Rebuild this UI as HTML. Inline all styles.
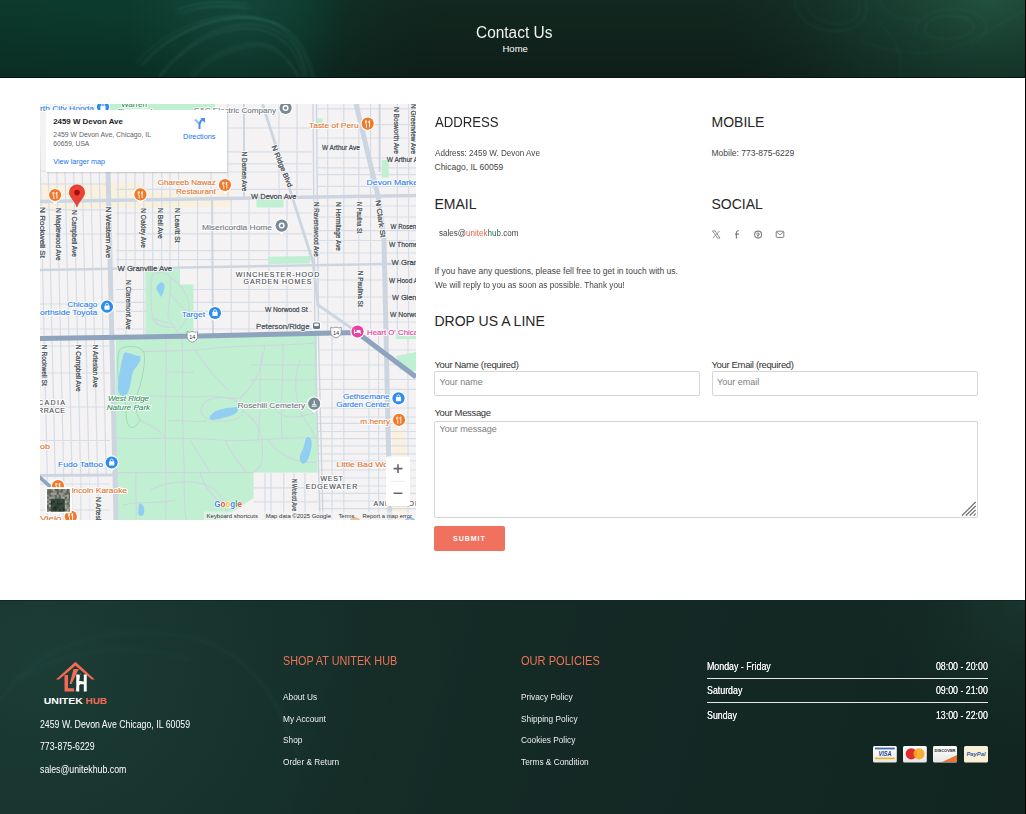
<!DOCTYPE html>
<html><head><meta charset="utf-8">
<style>
*{margin:0;padding:0;box-sizing:border-box}
html,body{width:1026px;height:814px;overflow:hidden;background:#fff;font-family:"Liberation Sans",sans-serif}
.a{position:absolute;white-space:nowrap;line-height:1}
.bg{position:absolute;left:0;width:1026px;overflow:hidden}
#map{position:absolute;left:40px;top:104px;width:376px;height:416px;overflow:hidden}
.h{font-size:14px;color:#262626}
.t{font-size:8.5px;color:#444}
.lbl{font-size:9.5px;color:#333;letter-spacing:-0.35px}
.inp{position:absolute;border:1px solid #d6d6d6;border-radius:2px;background:#fff}
.ph{font-size:9px;color:#7d7d7d}
.fl{font-size:9px;color:#f0f0f0;transform:scaleX(0.92);transform-origin:0 0}
.hr{position:absolute;left:707px;width:281px;height:1px;background:#e8e8e8}
.hd{font-size:10.5px;color:#f4f4f4;transform:scaleX(0.84);text-shadow:0 0 0.4px #fff}
.hdl{transform-origin:0 0}
.hdr{transform-origin:100% 0}
.sx{transform-origin:0 0}
</style></head><body>
<div class="bg" style="top:0;height:78px;background:#12271f">
<svg width="1026" height="78" viewBox="0 0 1026 78" style="position:absolute;left:0;top:0">
<defs>
<radialGradient id="hg1" cx="110" cy="25" r="340" gradientUnits="userSpaceOnUse"><stop offset="0" stop-color="#0c3c2e"/><stop offset="0.55" stop-color="#0d382c"/><stop offset="1" stop-color="#12271f" stop-opacity="0"/></radialGradient>
<radialGradient id="hg2" cx="990" cy="0" r="290" gradientUnits="userSpaceOnUse"><stop offset="0" stop-color="#21513f"/><stop offset="0.5" stop-color="#183d30" stop-opacity="0.75"/><stop offset="1" stop-color="#12271f" stop-opacity="0"/></radialGradient>
<radialGradient id="hg3" cx="235" cy="25" r="110" gradientUnits="userSpaceOnUse"><stop offset="0" stop-color="#1a5244" stop-opacity="0.6"/><stop offset="1" stop-color="#1b5646" stop-opacity="0"/></radialGradient>
<linearGradient id="hg4" x1="0" y1="0" x2="0" y2="78" gradientUnits="userSpaceOnUse"><stop offset="0" stop-color="#000" stop-opacity="0"/><stop offset="1" stop-color="#000" stop-opacity="0.22"/></linearGradient>
<filter id="hb" x="-20%" y="-50%" width="140%" height="200%"><feGaussianBlur stdDeviation="1.2"/></filter>
<filter id="hb2" x="-20%" y="-50%" width="140%" height="200%"><feGaussianBlur stdDeviation="4"/></filter>
</defs>
<rect width="1026" height="78" fill="#12271f"/>
<rect width="1026" height="78" fill="url(#hg1)"/>
<rect width="1026" height="78" fill="url(#hg3)"/>
<rect width="1026" height="78" fill="url(#hg2)"/>
<g filter="url(#hb)" fill="none" stroke="#5fb39b" stroke-width="0.8"><path transform="translate(1.0,1.5)" d="M140 64 C150 50 175 30 208 21 C225 16 250 12 276 23 C292 30 305 50 311.5 78" stroke-opacity="0.23"/><path transform="translate(3.5,1.4)" d="M140 64 C150 50 175 30 208 21 C225 16 250 12 276 23 C292 30 305 50 311.5 78" stroke-opacity="0.25"/><path transform="translate(-3.8,-0.2)" d="M140 64 C150 50 175 30 208 21 C225 16 250 12 276 23 C292 30 305 50 311.5 78" stroke-opacity="0.25"/><path transform="translate(1.2,2.4)" d="M140 64 C150 50 175 30 208 21 C225 16 250 12 276 23 C292 30 305 50 311.5 78" stroke-opacity="0.14"/><path transform="translate(-0.2,-1.5)" d="M159.5 78 C170 62 200 35 227.7 29 C245 25 270 22 292 45 C300 55 304 68 305.7 78" stroke-opacity="0.20"/><path transform="translate(0.6,-2.9)" d="M159.5 78 C170 62 200 35 227.7 29 C245 25 270 22 292 45 C300 55 304 68 305.7 78" stroke-opacity="0.15"/><path transform="translate(-1.8,2.5)" d="M159.5 78 C170 62 200 35 227.7 29 C245 25 270 22 292 45 C300 55 304 68 305.7 78" stroke-opacity="0.23"/><path transform="translate(-2.7,1.8)" d="M159.5 78 C170 62 200 35 227.7 29 C245 25 270 22 292 45 C300 55 304 68 305.7 78" stroke-opacity="0.14"/><path transform="translate(0.9,-2.2)" d="M188.7 78 C200 62 220 50 247 45 C262 43 280 48 296 78" stroke-opacity="0.12"/><path transform="translate(3.0,-1.7)" d="M188.7 78 C200 62 220 50 247 45 C262 43 280 48 296 78" stroke-opacity="0.15"/><path transform="translate(3.9,2.2)" d="M188.7 78 C200 62 220 50 247 45 C262 43 280 48 296 78" stroke-opacity="0.16"/><path transform="translate(3.7,0.2)" d="M188.7 78 C200 62 220 50 247 45 C262 43 280 48 296 78" stroke-opacity="0.21"/><path transform="translate(-2.4,2.6)" d="M179 11.7 C195 5 214 1 249 5.8" stroke-opacity="0.22"/><path transform="translate(3.7,2.4)" d="M179 11.7 C195 5 214 1 249 5.8" stroke-opacity="0.16"/><path transform="translate(-1.1,-2.0)" d="M179 11.7 C195 5 214 1 249 5.8" stroke-opacity="0.14"/><path transform="translate(-3.5,-1.2)" d="M179 11.7 C195 5 214 1 249 5.8" stroke-opacity="0.20"/></g>
<g filter="url(#hb)" fill="none" stroke="#5fb39b" stroke-width="0.9">
<path d="M795 0 C795 20 815 32 840 31 C862 30 870 15 865 0" stroke-opacity="0.16"/>
<path d="M805 0 C808 15 822 25 842 24 C858 22 862 10 858 0" stroke-opacity="0.12"/>
<path d="M925 30 C925 18 945 12 965 18 C980 24 975 36 955 38 C940 40 925 38 925 30" stroke-opacity="0.16"/>
<path d="M915 35 C912 20 935 5 965 10 C990 15 995 35 970 45" stroke-opacity="0.12"/>
<path d="M878 20 C890 35 905 50 900 78" stroke-opacity="0.12"/>
<path d="M860 40 C880 50 930 60 960 45 C985 35 1005 20 1026 10" stroke-opacity="0.12"/>
<path d="M880 0 C885 15 900 22 920 20" stroke-opacity="0.12"/>
</g>
<rect width="1026" height="78" fill="url(#hg4)"/>
<rect y="77" width="1026" height="1" fill="#041612"/>
</svg>
</div>
<div class="a" style="left:476px;top:24.5px;font-size:16px;color:#f2f2f2;transform:scaleX(0.965);transform-origin:0 0">Contact Us</div>
<div class="a" style="left:502.5px;top:43.5px;font-size:9.5px;color:#fff">Home</div>

<div id="map"><svg width="376" height="416" viewBox="40 104 376 416" style="position:absolute;left:0;top:0;font-family:'Liberation Sans',sans-serif">
<rect x="40" y="104" width="376" height="416" fill="#f4f2f3"/>
<path d="M40 183.5 L145 182.5 L145 191.5 L232 190.5 L232 196.5 L40 199 Z" fill="#faf0de"/>
<path d="M40 204 L232 201 L232 207 L40 209.5 Z" fill="#faf0de"/>
<path d="M392.5 418 L401 418 L409 470 L410 520 L394 520 Z" fill="#faf0de"/>
<path d="M55.5 475V520 M72.3 475V520 M89.5 475V520" stroke="#e4e8ee" stroke-width="0.9" fill="none"/>
<path d="M38.8 104L47.3 475 M46.7 104L55.2 475 M55.2 104L63.7 475 M63.5 104L72.0 475 M72.1 104L80.6 475 M80.6 104L89.1 475 M89.1 104L97.6 475 M97.7 104L106.2 475 M47.0 475V520 M63.7 475V520 M80.9 475V520 M98.0 475V520 M126.0 104V337 M143.8 104V337 M161.7 104V337 M178.6 104V337 M197.5 199V337 M231.3 199V337 M249.0 199V337 M269.0 199V337 M287.0 199V337 M211.0 104V199 M228.0 104V199 M279.0 104V199 M297.0 104V199 M118.0 104V270 M135.0 104V270 M152.7 104V270 M170.0 104V270 M327.7 104V336 M343.8 104V336 M358.8 104V336 M370.6 104V336 M397.3 104V336 M408.6 104V336 M332.0 336V520 M343.8 336V520 M368.9 336V520 M378.6 336V520 M408.0 336V520 M265.0 473V520 M271.0 473V520 M283.8 473V520 M294.0 473V520 M305.0 473V520 M40 171H110 M40 184H110 M40 209.8H110 M40 234H110 M40 304H110 M40 329H110 M40 346H110 M40 373H110 M40 407H110 M40 440.5H110 M40 484H110 M40 510H110 M116 213H312 M116 233.8H312 M116 250.7H312 M116 259.6H312 M116 289.5H312 M116 302.4H312 M116 311.3H312 M116 329H312 M116 128H312 M116 151.8H312 M116 163.8H312 M116 172H312 M116 189.4H312 M318 108.8H416 M318 124.6H416 M318 138H416 M318 158H416 M318 167.8H416 M318 174.7H416 M318 186.4H416 M318 206H416 M318 217H416 M318 230.6H416 M318 240.5H416 M318 253H416 M318 280H416 M318 297H416 M318 314H416 M318 322H416 M318 350H416 M318 365H416 M318 379.5H416 M318 389.3H416 M318 408H416 M318 417H416 M318 423.4H416 M318 431.5H416 M318 438.6H416 M318 445.8H416 M318 453.9H416 M318 461H416 M318 470H416 M318 478H416 M318 486H416 M318 493.3H416 M318 501H416 M318 508.6H416 M254 487.8H318 M254 501.8H318" stroke="#d6dde6" stroke-width="1.2" fill="none"/>
<path d="M115.8 339 L317 335 L317.5 472.6 L253.5 472.6 L253.5 498 L220 520 L115.8 520 Z" fill="#c0efd2"/>
<path d="M145.4 269.6 L180 269.3 L180 284.5 L193.5 284.5 L193.5 335 L145.4 336 Z" fill="#c0efd2"/>
<rect x="256.5" y="199.5" width="27" height="8" fill="#c0efd2"/>
<path d="M268 256.7 L310 256 L310 263.6 L268 264 Z" fill="#c0efd2"/>
<rect x="381.7" y="160" width="7" height="17.5" fill="#c0efd2"/>
<rect x="110" y="104" width="105" height="7" fill="#c0efd2"/>
<rect x="316" y="118.5" width="6.5" height="5" fill="#c0efd2"/>
<rect x="396" y="333" width="20" height="6" fill="#c0efd2"/>
<path d="M396 356 L416 352 L416 371 L400 370 Z" fill="#c0efd2"/>
<path d="M140 352 C160 350 190 352 215 348 C240 345 280 346 317 343 M166 340 C167 380 164 430 166 472 C167 490 165 505 166 520 M182 338 C184 370 181 420 184 460 C185 480 183 500 186 520 M166 372 C175 371 185 373 194 372 M140 397 C160 394 190 399 210 396 C218 395 228 400 242 398 M201 410 C201 402 212 397 222 397.5 C234 398 244 404 243 411 C242 419 232 422 221 421 C210 421 201 417 201 410 Z M168 421 C180 419 195 423 207 421 M117 438 C150 440 180 436 220 440 C250 443 280 436 317 438 M117 472.6 H253.5 M195 350 C205 365 215 378 228 390 M240 398 C255 385 262 370 265 345 M262 352 C258 380 262 410 258 440 M283 345 C283 380 280 410 282 438 M300 360 C292 380 296 405 305 420 C312 430 316 438 317 440 M250 365 H317 M250 380 C270 378 300 382 317 379 M243 411 C255 420 265 430 262 460 C262 465 258 470 254 472 M275 410 C285 420 300 418 317 412 M268 440 C278 455 300 465 317 462 M136 472 C135 490 137 505 136 520 M150 490 C170 480 200 478 215 490 C225 500 230 510 225 520 M200 472 C205 490 215 500 228 506 M123 505 C140 500 160 505 175 500 M190 440 C200 455 205 465 210 472 M225 440 C230 452 238 462 246 472 M140 420 C150 425 160 430 165 438 M152 276 C152 272 168 271 170 277 C172 290 168 305 168 315 C168 322 176 326 178.5 335 M152 276 C150 290 151 310 153 318 C155 325 162 328 175 327 M170 277 C178 283 188 292 189 305 C190 318 184 325 178 330 M169 292 C175 300 183 308 188 312 M153 318 C160 322 168 322 170 324" stroke="#cdd6df" stroke-width="1.05" fill="none"/>
<path d="M122 348 C130 345 140 346 144 352 C146 362 142 380 138 392 C135 400 134 410 140 420 C136 428 130 430 128 424 C124 415 128 405 124 398 C118 390 117 370 118 358 C118 352 120 349 122 348 Z" fill="none" stroke="#8fcca7" stroke-width="0.6"/>
<path d="M159.5 283 C161.5 281.5 163.5 282 164.3 285 C165 289 163 294 161 297 C159 293 157 291 156.3 288.5 C156.5 286.5 158 284.5 159.5 283 Z" fill="#92cef2"/>
<path d="M124 353 C128 351 133 356 140 356 C142 362 136 366 133 372 C130 380 131 390 126 395 C120 398 117 392 118 385 C119 375 121 362 124 353 Z" fill="#92cef2"/>
<path d="M212 414 C218 408 228 408 238 407 C240 411 234 416 226 417 C220 419 213 421 210 419 C209 417 210 416 212 414 Z" fill="#92cef2"/>
<path d="M307 437 C311 436 313 442 311 449 C309 456 309 462 303 464 C299 462 299 456 302 451 C305 446 304 440 307 437 Z" fill="#92cef2"/>
<path d="M139 504 C143 503 145 508 144 513 C143 517 138 517 138 512 Z" fill="#92cef2"/>
<path d="M40 201.5 L416 195.5" stroke="#cdd6e0" stroke-width="3.5" fill="none"/>
<path d="M106.5 104 L116 520" stroke="#cdd6e0" stroke-width="5" fill="none"/>
<path d="M40 270 L416 263.5" stroke="#cdd6e0" stroke-width="2.5" fill="none"/>
<path d="M262.5 104 L313 262 L318 305 L357 332" stroke="#cdd6e0" stroke-width="2.8" fill="none"/>
<path d="M356 104 L378 196 L384 240 L390 520" stroke="#cdd6e0" stroke-width="5" fill="none"/>
<path d="M379.6 104 L379.6 172" stroke="#cdd6e0" stroke-width="2" fill="none"/>
<path d="M212 198 L213 335" stroke="#cdd6e0" stroke-width="2" fill="none"/>
<path d="M244 104 L244 199" stroke="#cdd6e0" stroke-width="2" fill="none"/>
<path d="M313 104 L315 337 L320 520 M316.5 104 L318.5 337 L323 520" stroke="#cdd6e0" stroke-width="1.4" fill="none"/>
<path d="M40 475.5 L116 475" stroke="#cdd6e0" stroke-width="2.8" fill="none"/>
<path d="M40 338.5 L200 336 L357 332.5 L416 377" stroke="#8ea3bd" stroke-width="5" fill="none" stroke-linejoin="round"/>
<path d="M38 476 L52.5 488.5" stroke="#8ea3bd" stroke-width="3.6" fill="none"/>
<g><path d="M50.1 198.5 L55.1 204.6 L60.1 198.5 Z" fill="#fff" stroke="#00000022" stroke-width="0.6"/><circle cx="55.1" cy="195" r="7.199999999999999" fill="#fff"/><path d="M50.1 198.5 L55.1 204.6 L60.1 198.5 Z" fill="#fff"/><circle cx="55.1" cy="195" r="6.1" fill="#f07a2a"/>
<path d="M52.9 192.0v2.4a1.2 1.2 0 0 0 1 1.2v3.4M53.9 192.0v2.2M56.9 192.0v6.6M56.9 192.0c-1 0.6 -1 2.6 0 3" stroke="#fff" stroke-width="0.9" fill="none"/>
<g><path d="M135.4 197.9 L140.4 204.0 L145.4 197.9 Z" fill="#fff" stroke="#00000022" stroke-width="0.6"/><circle cx="140.4" cy="194.4" r="7.199999999999999" fill="#fff"/><path d="M135.4 197.9 L140.4 204.0 L145.4 197.9 Z" fill="#fff"/><circle cx="140.4" cy="194.4" r="6.1" fill="#f07a2a"/>
<path d="M138.2 191.4v2.4a1.2 1.2 0 0 0 1 1.2v3.4M139.2 191.4v2.2M142.2 191.4v6.6M142.2 191.4c-1 0.6 -1 2.6 0 3" stroke="#fff" stroke-width="0.9" fill="none"/>
<g><path d="M220.0 188.5 L225.0 194.6 L230.0 188.5 Z" fill="#fff" stroke="#00000022" stroke-width="0.6"/><circle cx="225" cy="185" r="7.199999999999999" fill="#fff"/><path d="M220.0 188.5 L225.0 194.6 L230.0 188.5 Z" fill="#fff"/><circle cx="225" cy="185" r="6.1" fill="#f07a2a"/>
<path d="M222.8 182.0v2.4a1.2 1.2 0 0 0 1 1.2v3.4M223.8 182.0v2.2M226.8 182.0v6.6M226.8 182.0c-1 0.6 -1 2.6 0 3" stroke="#fff" stroke-width="0.9" fill="none"/>
<g><path d="M362.7 127.1 L367.7 133.2 L372.7 127.1 Z" fill="#fff" stroke="#00000022" stroke-width="0.6"/><circle cx="367.7" cy="123.6" r="7.199999999999999" fill="#fff"/><path d="M362.7 127.1 L367.7 133.2 L372.7 127.1 Z" fill="#fff"/><circle cx="367.7" cy="123.6" r="6.1" fill="#f07a2a"/>
<path d="M365.5 120.6v2.4a1.2 1.2 0 0 0 1 1.2v3.4M366.5 120.6v2.2M369.5 120.6v6.6M369.5 120.6c-1 0.6 -1 2.6 0 3" stroke="#fff" stroke-width="0.9" fill="none"/>
<g><path d="M394.0 423.3 L399.0 429.4 L404.0 423.3 Z" fill="#fff" stroke="#00000022" stroke-width="0.6"/><circle cx="399" cy="419.8" r="7.199999999999999" fill="#fff"/><path d="M394.0 423.3 L399.0 429.4 L404.0 423.3 Z" fill="#fff"/><circle cx="399" cy="419.8" r="6.1" fill="#f07a2a"/>
<path d="M396.8 416.8v2.4a1.2 1.2 0 0 0 1 1.2v3.4M397.8 416.8v2.2M400.8 416.8v6.6M400.8 416.8c-1 0.6 -1 2.6 0 3" stroke="#fff" stroke-width="0.9" fill="none"/>
<g><path d="M53.0 489.5 L58.0 495.6 L63.0 489.5 Z" fill="#fff" stroke="#00000022" stroke-width="0.6"/><circle cx="58" cy="486" r="7.199999999999999" fill="#fff"/><path d="M53.0 489.5 L58.0 495.6 L63.0 489.5 Z" fill="#fff"/><circle cx="58" cy="486" r="6.1" fill="#f07a2a"/>
<path d="M55.8 483.0v2.4a1.2 1.2 0 0 0 1 1.2v3.4M56.8 483.0v2.2M59.8 483.0v6.6M59.8 483.0c-1 0.6 -1 2.6 0 3" stroke="#fff" stroke-width="0.9" fill="none"/>
<g><path d="M65.8 520.1 L70.8 526.2 L75.8 520.1 Z" fill="#fff" stroke="#00000022" stroke-width="0.6"/><circle cx="70.8" cy="516.6" r="7.199999999999999" fill="#fff"/><path d="M65.8 520.1 L70.8 526.2 L75.8 520.1 Z" fill="#fff"/><circle cx="70.8" cy="516.6" r="6.1" fill="#f07a2a"/>
<path d="M68.6 513.6v2.4a1.2 1.2 0 0 0 1 1.2v3.4M69.6 513.6v2.2M72.6 513.6v6.6M72.6 513.6c-1 0.6 -1 2.6 0 3" stroke="#fff" stroke-width="0.9" fill="none"/>
<g><path d="M350.0 526.5 L355.0 532.6 L360.0 526.5 Z" fill="#fff" stroke="#00000022" stroke-width="0.6"/><circle cx="355" cy="523" r="7.199999999999999" fill="#fff"/><path d="M350.0 526.5 L355.0 532.6 L360.0 526.5 Z" fill="#fff"/><circle cx="355" cy="523" r="6.1" fill="#f07a2a"/>
<path d="M352.8 520.0v2.4a1.2 1.2 0 0 0 1 1.2v3.4M353.8 520.0v2.2M356.8 520.0v6.6M356.8 520.0c-1 0.6 -1 2.6 0 3" stroke="#fff" stroke-width="0.9" fill="none"/>
<g><path d="M98.0 110.5 L103.0 116.6 L108.0 110.5 Z" fill="#fff" stroke="#00000022" stroke-width="0.6"/><circle cx="103" cy="107" r="7.199999999999999" fill="#fff"/><path d="M98.0 110.5 L103.0 116.6 L108.0 110.5 Z" fill="#fff"/><circle cx="103" cy="107" r="6.1" fill="#2e8cf0"/>
<rect x="100.4" y="105.8" width="5.2" height="4.2" rx="0.6" fill="#fff"/><path d="M101.6 106.0v-1a1.4 1.4 0 0 1 2.8 0v1" stroke="#fff" stroke-width="0.8" fill="none"/>
<g><path d="M102.0 310.2 L107.0 316.3 L112.0 310.2 Z" fill="#fff" stroke="#00000022" stroke-width="0.6"/><circle cx="107" cy="306.7" r="7.199999999999999" fill="#fff"/><path d="M102.0 310.2 L107.0 316.3 L112.0 310.2 Z" fill="#fff"/><circle cx="107" cy="306.7" r="6.1" fill="#2e8cf0"/>
<rect x="104.4" y="305.5" width="5.2" height="4.2" rx="0.6" fill="#fff"/><path d="M105.6 305.7v-1a1.4 1.4 0 0 1 2.8 0v1" stroke="#fff" stroke-width="0.8" fill="none"/>
<g><path d="M210.0 316.5 L215.0 322.6 L220.0 316.5 Z" fill="#fff" stroke="#00000022" stroke-width="0.6"/><circle cx="215" cy="313" r="7.199999999999999" fill="#fff"/><path d="M210.0 316.5 L215.0 322.6 L220.0 316.5 Z" fill="#fff"/><circle cx="215" cy="313" r="6.1" fill="#2e8cf0"/>
<rect x="212.4" y="311.8" width="5.2" height="4.2" rx="0.6" fill="#fff"/><path d="M213.6 312.0v-1a1.4 1.4 0 0 1 2.8 0v1" stroke="#fff" stroke-width="0.8" fill="none"/>
<g><path d="M106.7 466.0 L111.7 472.1 L116.7 466.0 Z" fill="#fff" stroke="#00000022" stroke-width="0.6"/><circle cx="111.7" cy="462.5" r="7.199999999999999" fill="#fff"/><path d="M106.7 466.0 L111.7 472.1 L116.7 466.0 Z" fill="#fff"/><circle cx="111.7" cy="462.5" r="6.1" fill="#2e8cf0"/>
<rect x="109.1" y="461.3" width="5.2" height="4.2" rx="0.6" fill="#fff"/><path d="M110.3 461.5v-1a1.4 1.4 0 0 1 2.8 0v1" stroke="#fff" stroke-width="0.8" fill="none"/>
<g><path d="M393.5 401.8 L398.5 407.9 L403.5 401.8 Z" fill="#fff" stroke="#00000022" stroke-width="0.6"/><circle cx="398.5" cy="398.3" r="7.199999999999999" fill="#fff"/><path d="M393.5 401.8 L398.5 407.9 L403.5 401.8 Z" fill="#fff"/><circle cx="398.5" cy="398.3" r="6.1" fill="#2e8cf0"/>
<rect x="395.9" y="397.1" width="5.2" height="4.2" rx="0.6" fill="#fff"/><path d="M397.1 397.3v-1a1.4 1.4 0 0 1 2.8 0v1" stroke="#fff" stroke-width="0.8" fill="none"/>
<g><path d="M405.0 526.5 L410.0 532.6 L415.0 526.5 Z" fill="#fff" stroke="#00000022" stroke-width="0.6"/><circle cx="410" cy="523" r="7.199999999999999" fill="#fff"/><path d="M405.0 526.5 L410.0 532.6 L415.0 526.5 Z" fill="#fff"/><circle cx="410" cy="523" r="6.1" fill="#2e8cf0"/>
<rect x="407.4" y="521.8" width="5.2" height="4.2" rx="0.6" fill="#fff"/><path d="M408.6 522.0v-1a1.4 1.4 0 0 1 2.8 0v1" stroke="#fff" stroke-width="0.8" fill="none"/>
<g><path d="M280.6 111.5 L285.6 117.6 L290.6 111.5 Z" fill="#fff" stroke="#00000022" stroke-width="0.6"/><circle cx="285.6" cy="108" r="7.199999999999999" fill="#fff"/><path d="M280.6 111.5 L285.6 117.6 L290.6 111.5 Z" fill="#fff"/><circle cx="285.6" cy="108" r="6.1" fill="#7a8a95"/>
<circle cx="285.6" cy="108" r="2.3" fill="none" stroke="#fff" stroke-width="1.4"/>
<g><path d="M276.7 229.1 L281.7 235.2 L286.7 229.1 Z" fill="#fff" stroke="#00000022" stroke-width="0.6"/><circle cx="281.7" cy="225.6" r="7.199999999999999" fill="#fff"/><path d="M276.7 229.1 L281.7 235.2 L286.7 229.1 Z" fill="#fff"/><circle cx="281.7" cy="225.6" r="6.1" fill="#7a8a95"/>
<circle cx="281.7" cy="225.6" r="2.3" fill="none" stroke="#fff" stroke-width="1.4"/>
<g><path d="M309.2 407.2 L314.2 413.3 L319.2 407.2 Z" fill="#fff" stroke="#00000022" stroke-width="0.6"/><circle cx="314.2" cy="403.7" r="7.199999999999999" fill="#fff"/><path d="M309.2 407.2 L314.2 413.3 L319.2 407.2 Z" fill="#fff"/><circle cx="314.2" cy="403.7" r="6.1" fill="#7a8a95"/>
<path d="M311.7 406.2h5M314.2 400.7v4M312.2 404.7h4" stroke="#fff" stroke-width="1" fill="none"/>
<g><path d="M352.5 335.0 L357.5 341.1 L362.5 335.0 Z" fill="#fff" stroke="#00000022" stroke-width="0.6"/><circle cx="357.5" cy="331.5" r="7.199999999999999" fill="#fff"/><path d="M352.5 335.0 L357.5 341.1 L362.5 335.0 Z" fill="#fff"/><circle cx="357.5" cy="331.5" r="6.1" fill="#e83fa6"/>
<path d="M354.5 329.5v4.5M354.5 332.5h6v1.5" stroke="#fff" stroke-width="0.9" fill="none"/><rect x="356.5" y="330.0" width="4" height="2.2" fill="#fff"/>
<rect x="312" y="321.5" width="9" height="8.5" rx="2" fill="#fff"/><rect x="313" y="322.5" width="7" height="6.5" rx="1.5" fill="#6d7b88"/><rect x="314.3" y="323.6" width="4.4" height="2.4" fill="#fff"/>
<path d="M187.10000000000002 331.6 c1.5 0.8 3 0.8 4 0 h2.4 c1 0.8 2.5 0.8 4 0 v5 c0 3.4 -2.8 5 -5.2 5.6 c-2.4 -0.6 -5.2 -2.2 -5.2 -5.6 Z" fill="#fff" stroke="#7d8894" stroke-width="0.8"/><text x="192.3" y="338.90000000000003" font-size="5.6" text-anchor="middle" fill="#333">14</text>
<path d="M330.8 327.3 c1.5 0.8 3 0.8 4 0 h2.4 c1 0.8 2.5 0.8 4 0 v5 c0 3.4 -2.8 5 -5.2 5.6 c-2.4 -0.6 -5.2 -2.2 -5.2 -5.6 Z" fill="#fff" stroke="#7d8894" stroke-width="0.8"/><text x="336" y="334.6" font-size="5.6" text-anchor="middle" fill="#333">14</text>
<text x="40.0" y="111.2" font-size="7.6" font-weight="normal" font-style="normal" textLength="54.0" lengthAdjust="spacingAndGlyphs" fill="#fff" stroke="#fff" stroke-width="1.8" stroke-linejoin="round">rth City Honda</text>
<text x="40.0" y="111.2" font-size="7.6" font-weight="normal" font-style="normal" textLength="54.0" lengthAdjust="spacingAndGlyphs" fill="#2b7de9" stroke="#2b7de9" stroke-width="0.12">rth City Honda</text>
<text x="121.0" y="107.2" font-size="7.6" font-weight="normal" font-style="normal" textLength="26.0" lengthAdjust="spacingAndGlyphs" fill="#fff" stroke="#fff" stroke-width="1.8" stroke-linejoin="round">Warren</text>
<text x="121.0" y="107.2" font-size="7.6" font-weight="normal" font-style="normal" textLength="26.0" lengthAdjust="spacingAndGlyphs" fill="#2f8f5b" stroke="#2f8f5b" stroke-width="0.12">Warren</text>
<text x="118.0" y="113.7" font-size="7.6" font-weight="normal" font-style="normal" textLength="34.0" lengthAdjust="spacingAndGlyphs" fill="#fff" stroke="#fff" stroke-width="1.8" stroke-linejoin="round">Playground</text>
<text x="118.0" y="113.7" font-size="7.6" font-weight="normal" font-style="normal" textLength="34.0" lengthAdjust="spacingAndGlyphs" fill="#2f8f5b" stroke="#2f8f5b" stroke-width="0.12">Playground</text>
<text x="194.0" y="112.7" font-size="7.6" font-weight="normal" font-style="normal" textLength="82.0" lengthAdjust="spacingAndGlyphs" fill="#fff" stroke="#fff" stroke-width="1.8" stroke-linejoin="round">S&amp;C Electric Company</text>
<text x="194.0" y="112.7" font-size="7.6" font-weight="normal" font-style="normal" textLength="82.0" lengthAdjust="spacingAndGlyphs" fill="#6f7880" stroke="#6f7880" stroke-width="0.12">S&amp;C Electric Company</text>
<text x="157.8" y="185.2" font-size="7.6" font-weight="normal" font-style="normal" textLength="58.0" lengthAdjust="spacingAndGlyphs" fill="#fff" stroke="#fff" stroke-width="1.8" stroke-linejoin="round">Ghareeb Nawaz</text>
<text x="157.8" y="185.2" font-size="7.6" font-weight="normal" font-style="normal" textLength="58.0" lengthAdjust="spacingAndGlyphs" fill="#e0722c" stroke="#e0722c" stroke-width="0.12">Ghareeb Nawaz</text>
<text x="176.0" y="193.5" font-size="7.6" font-weight="normal" font-style="normal" textLength="39.8" lengthAdjust="spacingAndGlyphs" fill="#fff" stroke="#fff" stroke-width="1.8" stroke-linejoin="round">Restaurant</text>
<text x="176.0" y="193.5" font-size="7.6" font-weight="normal" font-style="normal" textLength="39.8" lengthAdjust="spacingAndGlyphs" fill="#e0722c" stroke="#e0722c" stroke-width="0.12">Restaurant</text>
<text x="251.0" y="198.8" font-size="7" font-weight="normal" font-style="normal" textLength="45.5" lengthAdjust="spacingAndGlyphs" fill="#fff" stroke="#fff" stroke-width="1.8" stroke-linejoin="round">W Devon Ave</text>
<text x="251.0" y="198.8" font-size="7" font-weight="normal" font-style="normal" textLength="45.5" lengthAdjust="spacingAndGlyphs" fill="#4f575e" stroke="#4f575e" stroke-width="0.32">W Devon Ave</text>
<text x="309.0" y="128.1" font-size="7.6" font-weight="normal" font-style="normal" textLength="49.6" lengthAdjust="spacingAndGlyphs" fill="#fff" stroke="#fff" stroke-width="1.8" stroke-linejoin="round">Taste of Peru</text>
<text x="309.0" y="128.1" font-size="7.6" font-weight="normal" font-style="normal" textLength="49.6" lengthAdjust="spacingAndGlyphs" fill="#e0722c" stroke="#e0722c" stroke-width="0.12">Taste of Peru</text>
<text x="322.0" y="150.1" font-size="7" font-weight="normal" font-style="normal" textLength="37.8" lengthAdjust="spacingAndGlyphs" fill="#fff" stroke="#fff" stroke-width="1.8" stroke-linejoin="round">W Arthur Ave</text>
<text x="322.0" y="150.1" font-size="7" font-weight="normal" font-style="normal" textLength="37.8" lengthAdjust="spacingAndGlyphs" fill="#4f575e" stroke="#4f575e" stroke-width="0.32">W Arthur Ave</text>
<text x="386.8" y="162.0" font-size="7" font-weight="normal" font-style="normal" textLength="31.2" lengthAdjust="spacingAndGlyphs" fill="#fff" stroke="#fff" stroke-width="1.8" stroke-linejoin="round">W Arthur A</text>
<text x="386.8" y="162.0" font-size="7" font-weight="normal" font-style="normal" textLength="31.2" lengthAdjust="spacingAndGlyphs" fill="#4f575e" stroke="#4f575e" stroke-width="0.32">W Arthur A</text>
<text x="366.6" y="185.3" font-size="7.6" font-weight="normal" font-style="normal" textLength="51.4" lengthAdjust="spacingAndGlyphs" fill="#fff" stroke="#fff" stroke-width="1.8" stroke-linejoin="round">Devon Marke</text>
<text x="366.6" y="185.3" font-size="7.6" font-weight="normal" font-style="normal" textLength="51.4" lengthAdjust="spacingAndGlyphs" fill="#2b7de9" stroke="#2b7de9" stroke-width="0.12">Devon Marke</text>
<text x="202.0" y="229.7" font-size="7.6" font-weight="normal" font-style="normal" textLength="70.0" lengthAdjust="spacingAndGlyphs" fill="#fff" stroke="#fff" stroke-width="1.8" stroke-linejoin="round">Misericordia Home</text>
<text x="202.0" y="229.7" font-size="7.6" font-weight="normal" font-style="normal" textLength="70.0" lengthAdjust="spacingAndGlyphs" fill="#6f7880" stroke="#6f7880" stroke-width="0.12">Misericordia Home</text>
<text x="390.6" y="228.5" font-size="7" font-weight="normal" font-style="normal" textLength="27.4" lengthAdjust="spacingAndGlyphs" fill="#fff" stroke="#fff" stroke-width="1.8" stroke-linejoin="round">W Rosem</text>
<text x="390.6" y="228.5" font-size="7" font-weight="normal" font-style="normal" textLength="27.4" lengthAdjust="spacingAndGlyphs" fill="#4f575e" stroke="#4f575e" stroke-width="0.32">W Rosem</text>
<text x="389.0" y="246.5" font-size="7" font-weight="normal" font-style="normal" textLength="29.0" lengthAdjust="spacingAndGlyphs" fill="#fff" stroke="#fff" stroke-width="1.8" stroke-linejoin="round">W Thome</text>
<text x="389.0" y="246.5" font-size="7" font-weight="normal" font-style="normal" textLength="29.0" lengthAdjust="spacingAndGlyphs" fill="#4f575e" stroke="#4f575e" stroke-width="0.32">W Thome</text>
<text x="117.5" y="271.1" font-size="7" font-weight="normal" font-style="normal" textLength="54.5" lengthAdjust="spacingAndGlyphs" fill="#fff" stroke="#fff" stroke-width="1.8" stroke-linejoin="round">W Granville Ave</text>
<text x="117.5" y="271.1" font-size="7" font-weight="normal" font-style="normal" textLength="54.5" lengthAdjust="spacingAndGlyphs" fill="#4f575e" stroke="#4f575e" stroke-width="0.32">W Granville Ave</text>
<text x="391.6" y="264.5" font-size="7" font-weight="normal" font-style="normal" textLength="26.4" lengthAdjust="spacingAndGlyphs" fill="#fff" stroke="#fff" stroke-width="1.8" stroke-linejoin="round">W Gran</text>
<text x="391.6" y="264.5" font-size="7" font-weight="normal" font-style="normal" textLength="26.4" lengthAdjust="spacingAndGlyphs" fill="#4f575e" stroke="#4f575e" stroke-width="0.32">W Gran</text>
<text x="235.8" y="276.8" font-size="7.0" font-weight="normal" font-style="normal" textLength="83.5" lengthAdjust="spacing" fill="#fff" stroke="#fff" stroke-width="1.8" stroke-linejoin="round">WINCHESTER-HOOD</text>
<text x="235.8" y="276.8" font-size="7.0" font-weight="normal" font-style="normal" textLength="83.5" lengthAdjust="spacing" fill="#454b50" stroke="#454b50" stroke-width="0.12">WINCHESTER-HOOD</text>
<text x="243.6" y="283.9" font-size="7.0" font-weight="normal" font-style="normal" textLength="67.9" lengthAdjust="spacing" fill="#fff" stroke="#fff" stroke-width="1.8" stroke-linejoin="round">GARDEN HOMES</text>
<text x="243.6" y="283.9" font-size="7.0" font-weight="normal" font-style="normal" textLength="67.9" lengthAdjust="spacing" fill="#454b50" stroke="#454b50" stroke-width="0.12">GARDEN HOMES</text>
<text x="389.0" y="282.5" font-size="7" font-weight="normal" font-style="normal" textLength="29.0" lengthAdjust="spacingAndGlyphs" fill="#fff" stroke="#fff" stroke-width="1.8" stroke-linejoin="round">W Hood A</text>
<text x="389.0" y="282.5" font-size="7" font-weight="normal" font-style="normal" textLength="29.0" lengthAdjust="spacingAndGlyphs" fill="#4f575e" stroke="#4f575e" stroke-width="0.32">W Hood A</text>
<text x="392.0" y="299.5" font-size="7" font-weight="normal" font-style="normal" textLength="26.0" lengthAdjust="spacingAndGlyphs" fill="#fff" stroke="#fff" stroke-width="1.8" stroke-linejoin="round">W Glenl</text>
<text x="392.0" y="299.5" font-size="7" font-weight="normal" font-style="normal" textLength="26.0" lengthAdjust="spacingAndGlyphs" fill="#4f575e" stroke="#4f575e" stroke-width="0.32">W Glenl</text>
<text x="67.3" y="306.7" font-size="7.6" font-weight="normal" font-style="normal" textLength="30.0" lengthAdjust="spacingAndGlyphs" fill="#fff" stroke="#fff" stroke-width="1.8" stroke-linejoin="round">Chicago</text>
<text x="67.3" y="306.7" font-size="7.6" font-weight="normal" font-style="normal" textLength="30.0" lengthAdjust="spacingAndGlyphs" fill="#2b7de9" stroke="#2b7de9" stroke-width="0.12">Chicago</text>
<text x="40.0" y="314.7" font-size="7.6" font-weight="normal" font-style="normal" textLength="57.3" lengthAdjust="spacingAndGlyphs" fill="#fff" stroke="#fff" stroke-width="1.8" stroke-linejoin="round">orthside Toyota</text>
<text x="40.0" y="314.7" font-size="7.6" font-weight="normal" font-style="normal" textLength="57.3" lengthAdjust="spacingAndGlyphs" fill="#2b7de9" stroke="#2b7de9" stroke-width="0.12">orthside Toyota</text>
<text x="181.7" y="317.0" font-size="7.6" font-weight="normal" font-style="normal" textLength="23.3" lengthAdjust="spacingAndGlyphs" fill="#fff" stroke="#fff" stroke-width="1.8" stroke-linejoin="round">Target</text>
<text x="181.7" y="317.0" font-size="7.6" font-weight="normal" font-style="normal" textLength="23.3" lengthAdjust="spacingAndGlyphs" fill="#2b7de9" stroke="#2b7de9" stroke-width="0.12">Target</text>
<text x="265.0" y="312.3" font-size="7" font-weight="normal" font-style="normal" textLength="42.6" lengthAdjust="spacingAndGlyphs" fill="#fff" stroke="#fff" stroke-width="1.8" stroke-linejoin="round">W Norwood St</text>
<text x="265.0" y="312.3" font-size="7" font-weight="normal" font-style="normal" textLength="42.6" lengthAdjust="spacingAndGlyphs" fill="#4f575e" stroke="#4f575e" stroke-width="0.32">W Norwood St</text>
<text x="390.0" y="316.5" font-size="7" font-weight="normal" font-style="normal" textLength="28.0" lengthAdjust="spacingAndGlyphs" fill="#fff" stroke="#fff" stroke-width="1.8" stroke-linejoin="round">W Norwo</text>
<text x="390.0" y="316.5" font-size="7" font-weight="normal" font-style="normal" textLength="28.0" lengthAdjust="spacingAndGlyphs" fill="#4f575e" stroke="#4f575e" stroke-width="0.32">W Norwo</text>
<text x="256.0" y="328.5" font-size="7.6" font-weight="normal" font-style="normal" textLength="53.5" lengthAdjust="spacingAndGlyphs" fill="#fff" stroke="#fff" stroke-width="1.8" stroke-linejoin="round">Peterson/Ridge</text>
<text x="256.0" y="328.5" font-size="7.6" font-weight="normal" font-style="normal" textLength="53.5" lengthAdjust="spacingAndGlyphs" fill="#55606a" stroke="#55606a" stroke-width="0.32">Peterson/Ridge</text>
<text x="367.0" y="334.7" font-size="7.6" font-weight="normal" font-style="normal" textLength="51.0" lengthAdjust="spacingAndGlyphs" fill="#fff" stroke="#fff" stroke-width="1.8" stroke-linejoin="round">Heart O&#39; Chica</text>
<text x="367.0" y="334.7" font-size="7.6" font-weight="normal" font-style="normal" textLength="51.0" lengthAdjust="spacingAndGlyphs" fill="#e0379a" stroke="#e0379a" stroke-width="0.12">Heart O&#39; Chica</text>
<text x="108.0" y="401.0" font-size="7.6" font-weight="normal" font-style="italic" textLength="41.0" lengthAdjust="spacingAndGlyphs" fill="#fff" stroke="#fff" stroke-width="1.8" stroke-linejoin="round">West Ridge</text>
<text x="108.0" y="401.0" font-size="7.6" font-weight="normal" font-style="italic" textLength="41.0" lengthAdjust="spacingAndGlyphs" fill="#2f8f5b" stroke="#2f8f5b" stroke-width="0.12">West Ridge</text>
<text x="106.7" y="409.7" font-size="7.6" font-weight="normal" font-style="italic" textLength="43.5" lengthAdjust="spacingAndGlyphs" fill="#fff" stroke="#fff" stroke-width="1.8" stroke-linejoin="round">Nature Park</text>
<text x="106.7" y="409.7" font-size="7.6" font-weight="normal" font-style="italic" textLength="43.5" lengthAdjust="spacingAndGlyphs" fill="#2f8f5b" stroke="#2f8f5b" stroke-width="0.12">Nature Park</text>
<text x="38.0" y="405.3" font-size="7.0" font-weight="normal" font-style="normal" textLength="27.0" lengthAdjust="spacing" fill="#fff" stroke="#fff" stroke-width="1.8" stroke-linejoin="round">CADIA</text>
<text x="38.0" y="405.3" font-size="7.0" font-weight="normal" font-style="normal" textLength="27.0" lengthAdjust="spacing" fill="#454b50" stroke="#454b50" stroke-width="0.12">CADIA</text>
<text x="38.0" y="412.5" font-size="7.0" font-weight="normal" font-style="normal" textLength="27.0" lengthAdjust="spacing" fill="#fff" stroke="#fff" stroke-width="1.8" stroke-linejoin="round">RRACE</text>
<text x="38.0" y="412.5" font-size="7.0" font-weight="normal" font-style="normal" textLength="27.0" lengthAdjust="spacing" fill="#454b50" stroke="#454b50" stroke-width="0.12">RRACE</text>
<text x="237.6" y="408.2" font-size="7.6" font-weight="normal" font-style="normal" textLength="67.6" lengthAdjust="spacingAndGlyphs" fill="#fff" stroke="#fff" stroke-width="1.8" stroke-linejoin="round">Rosehill Cemetery</text>
<text x="237.6" y="408.2" font-size="7.6" font-weight="normal" font-style="normal" textLength="67.6" lengthAdjust="spacingAndGlyphs" fill="#6f7880" stroke="#6f7880" stroke-width="0.12">Rosehill Cemetery</text>
<text x="342.9" y="398.7" font-size="7.6" font-weight="normal" font-style="normal" textLength="46.6" lengthAdjust="spacingAndGlyphs" fill="#fff" stroke="#fff" stroke-width="1.8" stroke-linejoin="round">Gethsemane</text>
<text x="342.9" y="398.7" font-size="7.6" font-weight="normal" font-style="normal" textLength="46.6" lengthAdjust="spacingAndGlyphs" fill="#2b7de9" stroke="#2b7de9" stroke-width="0.12">Gethsemane</text>
<text x="336.2" y="406.7" font-size="7.6" font-weight="normal" font-style="normal" textLength="53.3" lengthAdjust="spacingAndGlyphs" fill="#fff" stroke="#fff" stroke-width="1.8" stroke-linejoin="round">Garden Center</text>
<text x="336.2" y="406.7" font-size="7.6" font-weight="normal" font-style="normal" textLength="53.3" lengthAdjust="spacingAndGlyphs" fill="#2b7de9" stroke="#2b7de9" stroke-width="0.12">Garden Center</text>
<text x="360.3" y="424.0" font-size="7.6" font-weight="normal" font-style="normal" textLength="29.7" lengthAdjust="spacingAndGlyphs" fill="#fff" stroke="#fff" stroke-width="1.8" stroke-linejoin="round">m.henry</text>
<text x="360.3" y="424.0" font-size="7.6" font-weight="normal" font-style="normal" textLength="29.7" lengthAdjust="spacingAndGlyphs" fill="#e0722c" stroke="#e0722c" stroke-width="0.12">m.henry</text>
<text x="40.0" y="449.4" font-size="7.6" font-weight="normal" font-style="normal" textLength="10.0" lengthAdjust="spacingAndGlyphs" fill="#fff" stroke="#fff" stroke-width="1.8" stroke-linejoin="round">ob</text>
<text x="40.0" y="449.4" font-size="7.6" font-weight="normal" font-style="normal" textLength="10.0" lengthAdjust="spacingAndGlyphs" fill="#e0722c" stroke="#e0722c" stroke-width="0.12">ob</text>
<text x="58.0" y="466.5" font-size="7.6" font-weight="normal" font-style="normal" textLength="45.0" lengthAdjust="spacingAndGlyphs" fill="#fff" stroke="#fff" stroke-width="1.8" stroke-linejoin="round">Fudo Tattoo</text>
<text x="58.0" y="466.5" font-size="7.6" font-weight="normal" font-style="normal" textLength="45.0" lengthAdjust="spacingAndGlyphs" fill="#2b7de9" stroke="#2b7de9" stroke-width="0.12">Fudo Tattoo</text>
<text x="336.6" y="466.5" font-size="7.6" font-weight="normal" font-style="normal" textLength="51.4" lengthAdjust="spacingAndGlyphs" fill="#fff" stroke="#fff" stroke-width="1.8" stroke-linejoin="round">Little Bad Wo</text>
<text x="336.6" y="466.5" font-size="7.6" font-weight="normal" font-style="normal" textLength="51.4" lengthAdjust="spacingAndGlyphs" fill="#e0722c" stroke="#e0722c" stroke-width="0.12">Little Bad Wo</text>
<text x="320.5" y="481.1" font-size="7.0" font-weight="normal" font-style="normal" textLength="22.4" lengthAdjust="spacing" fill="#fff" stroke="#fff" stroke-width="1.8" stroke-linejoin="round">WEST</text>
<text x="320.5" y="481.1" font-size="7.0" font-weight="normal" font-style="normal" textLength="22.4" lengthAdjust="spacing" fill="#454b50" stroke="#454b50" stroke-width="0.12">WEST</text>
<text x="305.8" y="488.7" font-size="7.0" font-weight="normal" font-style="normal" textLength="51.4" lengthAdjust="spacing" fill="#fff" stroke="#fff" stroke-width="1.8" stroke-linejoin="round">EDGEWATER</text>
<text x="305.8" y="488.7" font-size="7.0" font-weight="normal" font-style="normal" textLength="51.4" lengthAdjust="spacing" fill="#454b50" stroke="#454b50" stroke-width="0.12">EDGEWATER</text>
<text x="67.0" y="492.5" font-size="7.6" font-weight="normal" font-style="normal" textLength="60.0" lengthAdjust="spacingAndGlyphs" fill="#fff" stroke="#fff" stroke-width="1.8" stroke-linejoin="round">Lincoln Karaoke</text>
<text x="67.0" y="492.5" font-size="7.6" font-weight="normal" font-style="normal" textLength="60.0" lengthAdjust="spacingAndGlyphs" fill="#e0722c" stroke="#e0722c" stroke-width="0.12">Lincoln Karaoke</text>
<text x="373.4" y="506.2" font-size="7.0" font-weight="normal" font-style="normal" textLength="46.6" lengthAdjust="spacing" fill="#fff" stroke="#fff" stroke-width="1.8" stroke-linejoin="round">ANDERSON</text>
<text x="373.4" y="506.2" font-size="7.0" font-weight="normal" font-style="normal" textLength="46.6" lengthAdjust="spacing" fill="#454b50" stroke="#454b50" stroke-width="0.12">ANDERSON</text>
<text x="40.0" y="520.7" font-size="7.6" font-weight="normal" font-style="normal" textLength="21.5" lengthAdjust="spacingAndGlyphs" fill="#fff" stroke="#fff" stroke-width="1.8" stroke-linejoin="round">Viejo</text>
<text x="40.0" y="520.7" font-size="7.6" font-weight="normal" font-style="normal" textLength="21.5" lengthAdjust="spacingAndGlyphs" fill="#e0722c" stroke="#e0722c" stroke-width="0.12">Viejo</text>
<text transform="translate(39.8,207.0) rotate(90)" x="0" y="0" font-size="7" textLength="51.0" lengthAdjust="spacingAndGlyphs" fill="#fff" stroke="#fff" stroke-width="1.8" stroke-linejoin="round">N Rockwell St</text>
<text transform="translate(39.8,207.0) rotate(90)" x="0" y="0" font-size="7" textLength="51.0" lengthAdjust="spacingAndGlyphs" fill="#4f575e" stroke="#4f575e" stroke-width="0.32">N Rockwell St</text>
<text transform="translate(55.5,208.0) rotate(90)" x="0" y="0" font-size="7" textLength="52.7" lengthAdjust="spacingAndGlyphs" fill="#fff" stroke="#fff" stroke-width="1.8" stroke-linejoin="round">N Maplewood Ave</text>
<text transform="translate(55.5,208.0) rotate(90)" x="0" y="0" font-size="7" textLength="52.7" lengthAdjust="spacingAndGlyphs" fill="#4f575e" stroke="#4f575e" stroke-width="0.32">N Maplewood Ave</text>
<text transform="translate(72.3,210.0) rotate(90)" x="0" y="0" font-size="7" textLength="46.8" lengthAdjust="spacingAndGlyphs" fill="#fff" stroke="#fff" stroke-width="1.8" stroke-linejoin="round">N Campbell Ave</text>
<text transform="translate(72.3,210.0) rotate(90)" x="0" y="0" font-size="7" textLength="46.8" lengthAdjust="spacingAndGlyphs" fill="#4f575e" stroke="#4f575e" stroke-width="0.32">N Campbell Ave</text>
<text transform="translate(106.1,206.7) rotate(90)" x="0" y="0" font-size="7" textLength="51.5" lengthAdjust="spacingAndGlyphs" fill="#fff" stroke="#fff" stroke-width="1.8" stroke-linejoin="round">N Western Ave</text>
<text transform="translate(106.1,206.7) rotate(90)" x="0" y="0" font-size="7" textLength="51.5" lengthAdjust="spacingAndGlyphs" fill="#4f575e" stroke="#4f575e" stroke-width="0.32">N Western Ave</text>
<text transform="translate(140.9,208.3) rotate(90)" x="0" y="0" font-size="7" textLength="39.7" lengthAdjust="spacingAndGlyphs" fill="#fff" stroke="#fff" stroke-width="1.8" stroke-linejoin="round">N Oakley Ave</text>
<text transform="translate(140.9,208.3) rotate(90)" x="0" y="0" font-size="7" textLength="39.7" lengthAdjust="spacingAndGlyphs" fill="#4f575e" stroke="#4f575e" stroke-width="0.32">N Oakley Ave</text>
<text transform="translate(158.0,208.0) rotate(90)" x="0" y="0" font-size="7" textLength="30.7" lengthAdjust="spacingAndGlyphs" fill="#fff" stroke="#fff" stroke-width="1.8" stroke-linejoin="round">N Bell Ave</text>
<text transform="translate(158.0,208.0) rotate(90)" x="0" y="0" font-size="7" textLength="30.7" lengthAdjust="spacingAndGlyphs" fill="#4f575e" stroke="#4f575e" stroke-width="0.32">N Bell Ave</text>
<text transform="translate(175.2,208.0) rotate(90)" x="0" y="0" font-size="7" textLength="34.6" lengthAdjust="spacingAndGlyphs" fill="#fff" stroke="#fff" stroke-width="1.8" stroke-linejoin="round">N Leavitt St</text>
<text transform="translate(175.2,208.0) rotate(90)" x="0" y="0" font-size="7" textLength="34.6" lengthAdjust="spacingAndGlyphs" fill="#4f575e" stroke="#4f575e" stroke-width="0.32">N Leavitt St</text>
<text transform="translate(242.0,151.5) rotate(90)" x="0" y="0" font-size="7" textLength="39.9" lengthAdjust="spacingAndGlyphs" fill="#fff" stroke="#fff" stroke-width="1.8" stroke-linejoin="round">N Damen Ave</text>
<text transform="translate(242.0,151.5) rotate(90)" x="0" y="0" font-size="7" textLength="39.9" lengthAdjust="spacingAndGlyphs" fill="#4f575e" stroke="#4f575e" stroke-width="0.32">N Damen Ave</text>
<text transform="translate(314.0,202.0) rotate(90)" x="0" y="0" font-size="7" textLength="54.8" lengthAdjust="spacingAndGlyphs" fill="#fff" stroke="#fff" stroke-width="1.8" stroke-linejoin="round">N Ravenswood Ave</text>
<text transform="translate(314.0,202.0) rotate(90)" x="0" y="0" font-size="7" textLength="54.8" lengthAdjust="spacingAndGlyphs" fill="#4f575e" stroke="#4f575e" stroke-width="0.32">N Ravenswood Ave</text>
<text transform="translate(335.5,202.0) rotate(90)" x="0" y="0" font-size="7" textLength="49.0" lengthAdjust="spacingAndGlyphs" fill="#fff" stroke="#fff" stroke-width="1.8" stroke-linejoin="round">N Hermitage Ave</text>
<text transform="translate(335.5,202.0) rotate(90)" x="0" y="0" font-size="7" textLength="49.0" lengthAdjust="spacingAndGlyphs" fill="#4f575e" stroke="#4f575e" stroke-width="0.32">N Hermitage Ave</text>
<text transform="translate(356.9,202.0) rotate(90)" x="0" y="0" font-size="7" textLength="31.4" lengthAdjust="spacingAndGlyphs" fill="#fff" stroke="#fff" stroke-width="1.8" stroke-linejoin="round">N Paulina St</text>
<text transform="translate(356.9,202.0) rotate(90)" x="0" y="0" font-size="7" textLength="31.4" lengthAdjust="spacingAndGlyphs" fill="#4f575e" stroke="#4f575e" stroke-width="0.32">N Paulina St</text>
<text transform="translate(393.5,107.0) rotate(90)" x="0" y="0" font-size="7" textLength="47.0" lengthAdjust="spacingAndGlyphs" fill="#fff" stroke="#fff" stroke-width="1.8" stroke-linejoin="round">N Bosworth Ave</text>
<text transform="translate(393.5,107.0) rotate(90)" x="0" y="0" font-size="7" textLength="47.0" lengthAdjust="spacingAndGlyphs" fill="#4f575e" stroke="#4f575e" stroke-width="0.32">N Bosworth Ave</text>
<text transform="translate(410.5,104.0) rotate(90)" x="0" y="0" font-size="7" textLength="50.0" lengthAdjust="spacingAndGlyphs" fill="#fff" stroke="#fff" stroke-width="1.8" stroke-linejoin="round">N Greenview Ave</text>
<text transform="translate(410.5,104.0) rotate(90)" x="0" y="0" font-size="7" textLength="50.0" lengthAdjust="spacingAndGlyphs" fill="#4f575e" stroke="#4f575e" stroke-width="0.32">N Greenview Ave</text>
<text transform="translate(125.5,280.0) rotate(90)" x="0" y="0" font-size="7" textLength="49.7" lengthAdjust="spacingAndGlyphs" fill="#fff" stroke="#fff" stroke-width="1.8" stroke-linejoin="round">N Claremont Ave</text>
<text transform="translate(125.5,280.0) rotate(90)" x="0" y="0" font-size="7" textLength="49.7" lengthAdjust="spacingAndGlyphs" fill="#4f575e" stroke="#4f575e" stroke-width="0.32">N Claremont Ave</text>
<text transform="translate(357.5,270.7) rotate(90)" x="0" y="0" font-size="7" textLength="36.0" lengthAdjust="spacingAndGlyphs" fill="#fff" stroke="#fff" stroke-width="1.8" stroke-linejoin="round">N Paulina St</text>
<text transform="translate(357.5,270.7) rotate(90)" x="0" y="0" font-size="7" textLength="36.0" lengthAdjust="spacingAndGlyphs" fill="#4f575e" stroke="#4f575e" stroke-width="0.32">N Paulina St</text>
<text transform="translate(42.3,344.8) rotate(90)" x="0" y="0" font-size="7" textLength="41.0" lengthAdjust="spacingAndGlyphs" fill="#fff" stroke="#fff" stroke-width="1.8" stroke-linejoin="round">N Rockwell St</text>
<text transform="translate(42.3,344.8) rotate(90)" x="0" y="0" font-size="7" textLength="41.0" lengthAdjust="spacingAndGlyphs" fill="#4f575e" stroke="#4f575e" stroke-width="0.32">N Rockwell St</text>
<text transform="translate(76.2,344.8) rotate(90)" x="0" y="0" font-size="7" textLength="46.8" lengthAdjust="spacingAndGlyphs" fill="#fff" stroke="#fff" stroke-width="1.8" stroke-linejoin="round">N Campbell Ave</text>
<text transform="translate(76.2,344.8) rotate(90)" x="0" y="0" font-size="7" textLength="46.8" lengthAdjust="spacingAndGlyphs" fill="#4f575e" stroke="#4f575e" stroke-width="0.32">N Campbell Ave</text>
<text transform="translate(92.5,344.8) rotate(90)" x="0" y="0" font-size="7" textLength="42.9" lengthAdjust="spacingAndGlyphs" fill="#fff" stroke="#fff" stroke-width="1.8" stroke-linejoin="round">N Artesian Ave</text>
<text transform="translate(92.5,344.8) rotate(90)" x="0" y="0" font-size="7" textLength="42.9" lengthAdjust="spacingAndGlyphs" fill="#4f575e" stroke="#4f575e" stroke-width="0.32">N Artesian Ave</text>
<text transform="translate(292.0,479.0) rotate(90)" x="0" y="0" font-size="7" textLength="32.0" lengthAdjust="spacingAndGlyphs" fill="#fff" stroke="#fff" stroke-width="1.8" stroke-linejoin="round">N Wolcott Ave</text>
<text transform="translate(292.0,479.0) rotate(90)" x="0" y="0" font-size="7" textLength="32.0" lengthAdjust="spacingAndGlyphs" fill="#4f575e" stroke="#4f575e" stroke-width="0.32">N Wolcott Ave</text>
<text transform="translate(96.0,497.0) rotate(90)" x="0" y="0" font-size="7" textLength="43.5" lengthAdjust="spacingAndGlyphs" fill="#fff" stroke="#fff" stroke-width="1.8" stroke-linejoin="round">N Artesian Ave</text>
<text transform="translate(96.0,497.0) rotate(90)" x="0" y="0" font-size="7" textLength="43.5" lengthAdjust="spacingAndGlyphs" fill="#4f575e" stroke="#4f575e" stroke-width="0.32">N Artesian Ave</text>
<text transform="translate(271.5,146.5) rotate(68)" x="0" y="0" font-size="7" textLength="44.5" lengthAdjust="spacingAndGlyphs" fill="#fff" stroke="#fff" stroke-width="1.8" stroke-linejoin="round">N Ridge Blvd</text>
<text transform="translate(271.5,146.5) rotate(68)" x="0" y="0" font-size="7" textLength="44.5" lengthAdjust="spacingAndGlyphs" fill="#4f575e" stroke="#4f575e" stroke-width="0.32">N Ridge Blvd</text>
<text transform="translate(375.5,200.5) rotate(82)" x="0" y="0" font-size="7" textLength="37.5" lengthAdjust="spacingAndGlyphs" fill="#fff" stroke="#fff" stroke-width="1.8" stroke-linejoin="round">N Clark St</text>
<text transform="translate(375.5,200.5) rotate(82)" x="0" y="0" font-size="7" textLength="37.5" lengthAdjust="spacingAndGlyphs" fill="#4f575e" stroke="#4f575e" stroke-width="0.32">N Clark St</text>
<path d="M77 207 C75 201 69.3 197 69.3 192.5 A7.7 7.7 0 0 1 84.7 192.5 C84.7 197 79 201 77 207 Z" fill="#ea4335" stroke="#c5221f" stroke-width="0.5"/><circle cx="77" cy="192.6" r="2.8" fill="#a50e0e"/>
<rect x="46.5" y="110.5" width="181" height="62" fill="#000" opacity="0.12" transform="translate(0,0.8)"/>
<rect x="46" y="110" width="181" height="62" fill="#fff"/>
<text x="53.2" y="123.7" font-size="7.4" font-weight="bold" fill="#202124" textLength="69.7" lengthAdjust="spacingAndGlyphs">2459 W Devon Ave</text>
<text x="53.3" y="137" font-size="6.6" fill="#5f6368" textLength="97.7" lengthAdjust="spacingAndGlyphs">2459 W Devon Ave, Chicago, IL</text>
<text x="53.3" y="145.7" font-size="6.6" fill="#5f6368" textLength="36" lengthAdjust="spacingAndGlyphs">60659, USA</text>
<text x="53.3" y="164" font-size="6.6" fill="#1a73e8" textLength="51.7" lengthAdjust="spacingAndGlyphs">View larger map</text>
<text x="183" y="139" font-size="6.6" fill="#1a73e8" textLength="32.5" lengthAdjust="spacingAndGlyphs">Directions</text>
<path d="M199.5 124 L195 119.5" stroke="#8ab8f5" stroke-width="1.8" fill="none"/><path d="M199.5 129 L199.5 124.5 C199.5 122.5 200.5 121 202.5 119.5" stroke="#4a8ef2" stroke-width="2" fill="none"/><path d="M200.3 118 L205 118 L205 123 Z" fill="#4a8ef2"/>
<rect x="386" y="457" width="24" height="49" rx="1.5" fill="#000" opacity="0.12" transform="translate(0,0.8)"/><rect x="386" y="456.6" width="24" height="49.4" rx="1.5" fill="#fff"/>
<path d="M391 481.3 H405" stroke="#e6e6e6" stroke-width="0.8"/><path d="M393.6 468.6 H402.4 M398 464.2 V473 M393.6 493.3 H402.4" stroke="#666" stroke-width="1.6"/>
<rect x="45.5" y="487.5" width="26" height="25.5" rx="1.5" fill="#fff"/><rect x="46.8" y="488.8" width="23.4" height="23" fill="#7d8578"/>
<g><rect x="46.8" y="488.8" width="2.1" height="2.1" fill="#797d73"/><rect x="48.8" y="488.8" width="2.1" height="2.1" fill="#63675d"/><rect x="50.8" y="488.8" width="2.1" height="2.1" fill="#82867c"/><rect x="52.8" y="488.8" width="2.1" height="2.1" fill="#a3a79d"/><rect x="54.8" y="488.8" width="2.1" height="2.1" fill="#565a50"/><rect x="56.8" y="488.8" width="2.1" height="2.1" fill="#595d53"/><rect x="58.8" y="488.8" width="2.1" height="2.1" fill="#94988e"/><rect x="60.8" y="488.8" width="2.1" height="2.1" fill="#5c6056"/><rect x="62.8" y="488.8" width="2.1" height="2.1" fill="#7e8278"/><rect x="64.8" y="488.8" width="2.1" height="2.1" fill="#9a9e94"/><rect x="66.8" y="488.8" width="2.1" height="2.1" fill="#575b51"/><rect x="68.8" y="488.8" width="2.1" height="2.1" fill="#90948a"/><rect x="46.8" y="490.8" width="2.1" height="2.1" fill="#6b6f65"/><rect x="48.8" y="490.8" width="2.1" height="2.1" fill="#54584e"/><rect x="50.8" y="490.8" width="2.1" height="2.1" fill="#5b5f55"/><rect x="52.8" y="490.8" width="2.1" height="2.1" fill="#878b81"/><rect x="54.8" y="490.8" width="2.1" height="2.1" fill="#85897f"/><rect x="56.8" y="490.8" width="2.1" height="2.1" fill="#585c52"/><rect x="58.8" y="490.8" width="2.1" height="2.1" fill="#6e7268"/><rect x="60.8" y="490.8" width="2.1" height="2.1" fill="#5b5f55"/><rect x="62.8" y="490.8" width="2.1" height="2.1" fill="#969a90"/><rect x="64.8" y="490.8" width="2.1" height="2.1" fill="#868a80"/><rect x="66.8" y="490.8" width="2.1" height="2.1" fill="#575b51"/><rect x="68.8" y="490.8" width="2.1" height="2.1" fill="#989c92"/><rect x="46.8" y="492.8" width="2.1" height="2.1" fill="#5f6359"/><rect x="48.8" y="492.8" width="2.1" height="2.1" fill="#6c7066"/><rect x="50.8" y="492.8" width="2.1" height="2.1" fill="#a0a49a"/><rect x="52.8" y="492.8" width="2.1" height="2.1" fill="#a0a49a"/><rect x="54.8" y="492.8" width="2.1" height="2.1" fill="#9a9e94"/><rect x="56.8" y="492.8" width="2.1" height="2.1" fill="#575b51"/><rect x="58.8" y="492.8" width="2.1" height="2.1" fill="#999d93"/><rect x="60.8" y="492.8" width="2.1" height="2.1" fill="#9a9e94"/><rect x="62.8" y="492.8" width="2.1" height="2.1" fill="#82867c"/><rect x="64.8" y="492.8" width="2.1" height="2.1" fill="#565a50"/><rect x="66.8" y="492.8" width="2.1" height="2.1" fill="#6c7066"/><rect x="68.8" y="492.8" width="2.1" height="2.1" fill="#55594f"/><rect x="46.8" y="494.8" width="2.1" height="2.1" fill="#979b91"/><rect x="48.8" y="494.8" width="2.1" height="2.1" fill="#61655b"/><rect x="50.8" y="494.8" width="2.1" height="2.1" fill="#75796f"/><rect x="52.8" y="494.8" width="2.1" height="2.1" fill="#85897f"/><rect x="54.8" y="494.8" width="2.1" height="2.1" fill="#62665c"/><rect x="56.8" y="494.8" width="2.1" height="2.1" fill="#95998f"/><rect x="58.8" y="494.8" width="2.1" height="2.1" fill="#5f6359"/><rect x="60.8" y="494.8" width="2.1" height="2.1" fill="#999d93"/><rect x="62.8" y="494.8" width="2.1" height="2.1" fill="#777b71"/><rect x="64.8" y="494.8" width="2.1" height="2.1" fill="#979b91"/><rect x="66.8" y="494.8" width="2.1" height="2.1" fill="#a7aba1"/><rect x="68.8" y="494.8" width="2.1" height="2.1" fill="#676b61"/><rect x="46.8" y="496.8" width="2.1" height="2.1" fill="#5d6157"/><rect x="48.8" y="496.8" width="2.1" height="2.1" fill="#9a9e94"/><rect x="50.8" y="496.8" width="2.1" height="2.1" fill="#999d93"/><rect x="52.8" y="496.8" width="2.1" height="2.1" fill="#a1a59b"/><rect x="54.8" y="496.8" width="2.1" height="2.1" fill="#686c62"/><rect x="56.8" y="496.8" width="2.1" height="2.1" fill="#7f8379"/><rect x="58.8" y="496.8" width="2.1" height="2.1" fill="#5c6056"/><rect x="60.8" y="496.8" width="2.1" height="2.1" fill="#969a90"/><rect x="62.8" y="496.8" width="2.1" height="2.1" fill="#abafa5"/><rect x="64.8" y="496.8" width="2.1" height="2.1" fill="#585c52"/><rect x="66.8" y="496.8" width="2.1" height="2.1" fill="#989c92"/><rect x="68.8" y="496.8" width="2.1" height="2.1" fill="#575b51"/><rect x="46.8" y="498.8" width="2.1" height="2.1" fill="#9fa399"/><rect x="48.8" y="498.8" width="2.1" height="2.1" fill="#6a6e64"/><rect x="50.8" y="498.8" width="2.1" height="2.1" fill="#354539"/><rect x="52.8" y="498.8" width="2.1" height="2.1" fill="#38483c"/><rect x="54.8" y="498.8" width="2.1" height="2.1" fill="#314135"/><rect x="56.8" y="498.8" width="2.1" height="2.1" fill="#2a3a2e"/><rect x="58.8" y="498.8" width="2.1" height="2.1" fill="#334337"/><rect x="60.8" y="498.8" width="2.1" height="2.1" fill="#3b4b3f"/><rect x="62.8" y="498.8" width="2.1" height="2.1" fill="#334337"/><rect x="64.8" y="498.8" width="2.1" height="2.1" fill="#7e8278"/><rect x="66.8" y="498.8" width="2.1" height="2.1" fill="#767a70"/><rect x="68.8" y="498.8" width="2.1" height="2.1" fill="#6f7369"/><rect x="46.8" y="500.8" width="2.1" height="2.1" fill="#676b61"/><rect x="48.8" y="500.8" width="2.1" height="2.1" fill="#a9ada3"/><rect x="50.8" y="500.8" width="2.1" height="2.1" fill="#253529"/><rect x="52.8" y="500.8" width="2.1" height="2.1" fill="#1b2b1f"/><rect x="54.8" y="500.8" width="2.1" height="2.1" fill="#3a4a3e"/><rect x="56.8" y="500.8" width="2.1" height="2.1" fill="#29392d"/><rect x="58.8" y="500.8" width="2.1" height="2.1" fill="#37473b"/><rect x="60.8" y="500.8" width="2.1" height="2.1" fill="#354539"/><rect x="62.8" y="500.8" width="2.1" height="2.1" fill="#2b3b2f"/><rect x="64.8" y="500.8" width="2.1" height="2.1" fill="#adb1a7"/><rect x="66.8" y="500.8" width="2.1" height="2.1" fill="#898d83"/><rect x="68.8" y="500.8" width="2.1" height="2.1" fill="#74786e"/><rect x="46.8" y="502.8" width="2.1" height="2.1" fill="#9da197"/><rect x="48.8" y="502.8" width="2.1" height="2.1" fill="#595d53"/><rect x="50.8" y="502.8" width="2.1" height="2.1" fill="#1d2d21"/><rect x="52.8" y="502.8" width="2.1" height="2.1" fill="#36463a"/><rect x="54.8" y="502.8" width="2.1" height="2.1" fill="#304034"/><rect x="56.8" y="502.8" width="2.1" height="2.1" fill="#203024"/><rect x="58.8" y="502.8" width="2.1" height="2.1" fill="#2b3b2f"/><rect x="60.8" y="502.8" width="2.1" height="2.1" fill="#1f2f23"/><rect x="62.8" y="502.8" width="2.1" height="2.1" fill="#354539"/><rect x="64.8" y="502.8" width="2.1" height="2.1" fill="#85897f"/><rect x="66.8" y="502.8" width="2.1" height="2.1" fill="#55594f"/><rect x="68.8" y="502.8" width="2.1" height="2.1" fill="#a5a99f"/><rect x="46.8" y="504.8" width="2.1" height="2.1" fill="#595d53"/><rect x="48.8" y="504.8" width="2.1" height="2.1" fill="#b1b5ab"/><rect x="50.8" y="504.8" width="2.1" height="2.1" fill="#39493d"/><rect x="52.8" y="504.8" width="2.1" height="2.1" fill="#3a4a3e"/><rect x="54.8" y="504.8" width="2.1" height="2.1" fill="#2a3a2e"/><rect x="56.8" y="504.8" width="2.1" height="2.1" fill="#2b3b2f"/><rect x="58.8" y="504.8" width="2.1" height="2.1" fill="#2c3c30"/><rect x="60.8" y="504.8" width="2.1" height="2.1" fill="#3c4c40"/><rect x="62.8" y="504.8" width="2.1" height="2.1" fill="#354539"/><rect x="64.8" y="504.8" width="2.1" height="2.1" fill="#9a9e94"/><rect x="66.8" y="504.8" width="2.1" height="2.1" fill="#8a8e84"/><rect x="68.8" y="504.8" width="2.1" height="2.1" fill="#585c52"/><rect x="46.8" y="506.8" width="2.1" height="2.1" fill="#5b5f55"/><rect x="48.8" y="506.8" width="2.1" height="2.1" fill="#72766c"/><rect x="50.8" y="506.8" width="2.1" height="2.1" fill="#344438"/><rect x="52.8" y="506.8" width="2.1" height="2.1" fill="#1a2a1e"/><rect x="54.8" y="506.8" width="2.1" height="2.1" fill="#19291d"/><rect x="56.8" y="506.8" width="2.1" height="2.1" fill="#29392d"/><rect x="58.8" y="506.8" width="2.1" height="2.1" fill="#3a4a3e"/><rect x="60.8" y="506.8" width="2.1" height="2.1" fill="#324236"/><rect x="62.8" y="506.8" width="2.1" height="2.1" fill="#28382c"/><rect x="64.8" y="506.8" width="2.1" height="2.1" fill="#abafa5"/><rect x="66.8" y="506.8" width="2.1" height="2.1" fill="#81857b"/><rect x="68.8" y="506.8" width="2.1" height="2.1" fill="#a5a99f"/><rect x="46.8" y="508.8" width="2.1" height="2.1" fill="#7c8076"/><rect x="48.8" y="508.8" width="2.1" height="2.1" fill="#52564c"/><rect x="50.8" y="508.8" width="2.1" height="2.1" fill="#334337"/><rect x="52.8" y="508.8" width="2.1" height="2.1" fill="#2c3c30"/><rect x="54.8" y="508.8" width="2.1" height="2.1" fill="#203024"/><rect x="56.8" y="508.8" width="2.1" height="2.1" fill="#3d4d41"/><rect x="58.8" y="508.8" width="2.1" height="2.1" fill="#1d2d21"/><rect x="60.8" y="508.8" width="2.1" height="2.1" fill="#354539"/><rect x="62.8" y="508.8" width="2.1" height="2.1" fill="#19291d"/><rect x="64.8" y="508.8" width="2.1" height="2.1" fill="#6b6f65"/><rect x="66.8" y="508.8" width="2.1" height="2.1" fill="#b2b6ac"/><rect x="68.8" y="508.8" width="2.1" height="2.1" fill="#74786e"/><rect x="46.8" y="510.8" width="2.1" height="2.1" fill="#60645a"/><rect x="48.8" y="510.8" width="2.1" height="2.1" fill="#aeb2a8"/><rect x="50.8" y="510.8" width="2.1" height="2.1" fill="#253529"/><rect x="52.8" y="510.8" width="2.1" height="2.1" fill="#2f3f33"/><rect x="54.8" y="510.8" width="2.1" height="2.1" fill="#2f3f33"/><rect x="56.8" y="510.8" width="2.1" height="2.1" fill="#354539"/><rect x="58.8" y="510.8" width="2.1" height="2.1" fill="#1b2b1f"/><rect x="60.8" y="510.8" width="2.1" height="2.1" fill="#203024"/><rect x="62.8" y="510.8" width="2.1" height="2.1" fill="#324236"/><rect x="64.8" y="510.8" width="2.1" height="2.1" fill="#83877d"/><rect x="66.8" y="510.8" width="2.1" height="2.1" fill="#969a90"/><rect x="68.8" y="510.8" width="2.1" height="2.1" fill="#73776d"/></g><rect x="46.2" y="488.2" width="24.6" height="24.3" fill="none" stroke="#fff" stroke-width="1.6"/>
<rect x="204" y="511.5" width="212" height="8.5" fill="#f5f5f5" opacity="0.55"/>
<text x="206.6" y="517.6" font-size="5.2" fill="#333" textLength="51.4" lengthAdjust="spacingAndGlyphs">Keyboard shortcuts</text>
<text x="265.8" y="517.6" font-size="5.2" fill="#333" textLength="65.2" lengthAdjust="spacingAndGlyphs">Map data ©2025 Google</text>
<text x="338.4" y="517.6" font-size="5.2" fill="#333" textLength="16.1" lengthAdjust="spacingAndGlyphs">Terms</text>
<text x="362.6" y="517.6" font-size="5.2" fill="#333" textLength="49.4" lengthAdjust="spacingAndGlyphs">Report a map error</text>
<text x="214.3" y="506.8" font-size="9" font-weight="bold" textLength="27.7" lengthAdjust="spacingAndGlyphs" stroke="#fff" stroke-width="1.2" paint-order="stroke"><tspan fill="#4285f4">G</tspan><tspan fill="#ea4335">o</tspan><tspan fill="#fbbc05">o</tspan><tspan fill="#4285f4">g</tspan><tspan fill="#34a853">l</tspan><tspan fill="#ea4335">e</tspan></text>
</svg></div>

<div class="a h sx" style="left:434.5px;top:114.5px;transform:scaleX(0.94)">ADDRESS</div>
<div class="a t sx" style="left:434.5px;top:149px;transform:scaleX(0.95)">Address: 2459 W. Devon Ave</div>
<div class="a t" style="left:434.5px;top:163px">Chicago, IL 60059</div>
<div class="a h" style="left:711.5px;top:114.5px">MOBILE</div>
<div class="a t" style="left:711.5px;top:148.5px">Mobile: 773-875-6229</div>
<div class="a h" style="left:434.5px;top:197px">EMAIL</div>
<div class="a t sx" style="left:439px;top:229px;transform:scaleX(0.95)">sales@<span style="color:#e9634f">unitek</span><span style="color:#2c6b5a">hub</span>.com</div>
<div class="a h" style="left:711.5px;top:197px">SOCIAL</div>
<svg style="position:absolute;left:710px;top:228px" width="80" height="14" viewBox="710 228 80 14">
 <path d="M712.5 230.9 H715 L720 238.1 H717.5 Z" fill="none" stroke="#7a7a7a" stroke-width="0.8"/>
 <path d="M719.6 230.9 L712.8 238.1" stroke="#7a7a7a" stroke-width="0.8" fill="none"/>
 <path d="M738.9 230.8 C737.2 230.5 736.4 231.4 736.4 233 V238.5 M735 234.1 H739" stroke="#808080" stroke-width="1.2" fill="none"/>
 <circle cx="758.1" cy="234.6" r="3.5" fill="none" stroke="#808080" stroke-width="1.1"/>
 <path d="M757.6 237.6 L758.4 233.3 M757.2 235.6 C759.8 236 760 233 758 232.9 C756.6 232.9 756.5 234.2 756.8 234.6" stroke="#808080" stroke-width="0.9" fill="none"/>
 <rect x="776.2" y="231.2" width="7.6" height="6.2" rx="0.8" fill="none" stroke="#808080" stroke-width="1"/>
 <path d="M776.6 232 L780 234.8 L783.4 232" stroke="#808080" stroke-width="0.9" fill="none"/>
</svg>
<div class="a t" style="left:434.5px;top:267px">If you have any questions, please fell free to get in touch with us.</div>
<div class="a t sx" style="left:434.5px;top:281px;transform:scaleX(0.965)">We will reply to you as soon as possible. Thank you!</div>
<div class="a h" style="left:434.5px;top:313.5px">DROP US A LINE</div>

<div class="a lbl" style="left:434.5px;top:359.5px">Your Name (required)</div>
<div class="inp" style="left:434px;top:371px;width:266px;height:25px"></div>
<div class="a ph" style="left:439.5px;top:378px">Your name</div>
<div class="a lbl" style="left:711.5px;top:359.5px">Your Email (required)</div>
<div class="inp" style="left:712px;top:371px;width:266px;height:25px"></div>
<div class="a ph" style="left:717px;top:378px">Your email</div>
<div class="a lbl" style="left:434.5px;top:407.5px">Your Message</div>
<div class="inp" style="left:434px;top:421px;width:544px;height:97px"></div>
<div class="a ph" style="left:439.5px;top:425px">Your message</div>
<svg style="position:absolute;left:960px;top:500px" width="18" height="18" viewBox="960 500 18 18">
 <path d="M962.3 515.3 L975.4 502.3 M966.2 515.3 L975.4 506.2 M970.1 515.3 L975.4 510.1 M974 515.3 L975.4 513.9" stroke="#6e6e6e" stroke-width="1.2" stroke-linecap="round"/>
</svg>
<div style="position:absolute;left:434px;top:526px;width:71px;height:25px;background:#f0725e;border-radius:2px"></div>
<div class="a" style="left:453px;top:535px;font-size:7px;color:#fff;font-weight:bold;letter-spacing:1px">SUBMIT</div>

<div class="bg" style="top:600px;height:214px;background:#122722">
<svg width="1026" height="214" viewBox="0 600 1026 214" style="position:absolute;left:0;top:0">
<defs>
<radialGradient id="fg1" cx="40" cy="660" r="420" gradientUnits="userSpaceOnUse"><stop offset="0" stop-color="#1c3d36"/><stop offset="0.6" stop-color="#17332d" stop-opacity="0.7"/><stop offset="1" stop-color="#152d28" stop-opacity="0"/></radialGradient>
<radialGradient id="fg2" cx="1026" cy="600" r="180" gradientUnits="userSpaceOnUse"><stop offset="0" stop-color="#1f4136" stop-opacity="0.9"/><stop offset="1" stop-color="#152d28" stop-opacity="0"/></radialGradient>
<linearGradient id="fg3" x1="300" y1="600" x2="1026" y2="814" gradientUnits="userSpaceOnUse"><stop offset="0" stop-color="#000" stop-opacity="0"/><stop offset="1" stop-color="#000" stop-opacity="0.16"/></linearGradient>
<filter id="fb" x="-20%" y="-50%" width="140%" height="200%"><feGaussianBlur stdDeviation="2"/></filter>
</defs>
<rect x="0" y="600" width="1026" height="214" fill="#152c27"/>
<rect x="0" y="600" width="1026" height="214" fill="url(#fg1)"/>
<rect x="0" y="600" width="1026" height="214" fill="url(#fg2)"/>
<g filter="url(#fb)" fill="none" stroke="#5aa08c" stroke-opacity="0.09" stroke-width="2">
<path d="M0 700 C40 640 120 620 200 640 C250 655 280 700 300 760"/>
<path d="M20 680 C60 650 130 640 190 660"/>
</g>
<rect x="0" y="600" width="1026" height="214" fill="url(#fg3)"/>
<rect x="0" y="600" width="1026" height="1" fill="#0f2a25"/>
</svg>
</div>
<svg style="position:absolute;left:40px;top:658px" width="72" height="50" viewBox="40 658 72 50">
<path d="M56 679.4 L75.4 661.8 L94.8 679.4 L91.8 679.4 L75.4 665.8 L59 679.4 Z" fill="#ef6b55"/>
<path d="M64.5 675 L68 675 L68 688.2 L74 688.2 L74 691.6 L64.5 691.6 Z" fill="#ef6b55"/>
<path d="M73.5 669 L78.8 669 L71.5 684 L69.6 684 Z" fill="#ef6b55"/>
<path d="M76.3 674.5 L79.2 674.5 L79.2 681.5 L83.8 681.5 L83.8 674.5 L86.7 674.5 L86.7 691.6 L83.8 691.6 L83.8 684.3 L79.2 684.3 L79.2 691.6 L76.3 691.6 Z" fill="#fff"/>
<path d="M80.5 673 L76.5 682 L79.5 682 L75 692 L82 681 L79 681 Z" fill="#fff"/>
<text x="43.8" y="703.8" font-size="9" font-weight="bold" fill="#fff" textLength="39" lengthAdjust="spacingAndGlyphs">UNITEK</text>
<text x="85.6" y="703.8" font-size="9" font-weight="bold" fill="#ef6b55" textLength="21.4" lengthAdjust="spacingAndGlyphs">HUB</text>
</svg>
<div class="a sx" style="left:40px;top:720px;font-size:10px;color:#fff;transform:scaleX(0.876)">2459 W. Devon Ave Chicago, IL 60059</div>
<div class="a sx" style="left:40px;top:742px;font-size:10px;color:#fff;transform:scaleX(0.876)">773-875-6229</div>
<div class="a sx" style="left:40px;top:765px;font-size:10px;color:#fff;transform:scaleX(0.876)">sales@unitekhub.com</div>
<div class="a sx" style="left:283px;top:655px;font-size:12.5px;color:#ec7357;transform:scaleX(0.865)">SHOP AT UNITEK HUB</div>
<div class="a fl" style="left:283px;top:692.5px">About Us</div>
<div class="a fl" style="left:283px;top:714.5px">My Account</div>
<div class="a fl" style="left:283px;top:735.5px">Shop</div>
<div class="a fl" style="left:283px;top:757.5px">Order &amp; Return</div>
<div class="a sx" style="left:521px;top:655px;font-size:12.5px;color:#ec7357;transform:scaleX(0.886)">OUR POLICIES</div>
<div class="a fl" style="left:521px;top:692.5px">Privacy Policy</div>
<div class="a fl" style="left:521px;top:714.5px">Shipping Policy</div>
<div class="a fl" style="left:521px;top:735.5px">Cookies Policy</div>
<div class="a fl" style="left:521px;top:757.5px">Terms &amp; Condition</div>

<div class="a hd hdl" style="left:707px;top:661px">Monday - Friday</div>
<div class="a hd hdr" style="right:38px;top:661px">08:00 - 20:00</div>
<div class="hr" style="top:678px"></div>
<div class="a hd hdl" style="left:707px;top:685px">Saturday</div>
<div class="a hd hdr" style="right:38px;top:685px">09:00 - 21:00</div>
<div class="hr" style="top:702px"></div>
<div class="a hd hdl" style="left:707px;top:709.5px">Sunday</div>
<div class="a hd hdr" style="right:38px;top:709.5px">13:00 - 22:00</div>
<svg style="position:absolute;left:870px;top:744px" width="122" height="22" viewBox="870 744 122 22">
<defs><linearGradient id="cg" x1="0" y1="0" x2="0" y2="1"><stop offset="0" stop-color="#fff"/><stop offset="1" stop-color="#e6e6e6"/></linearGradient></defs>
<rect x="873" y="746" width="23.8" height="16.4" rx="1.5" fill="url(#cg)"/>
<rect x="875" y="747.6" width="19.8" height="1.8" fill="#3f6bb5"/>
<rect x="875" y="757.6" width="19.8" height="1.6" fill="#e8b326"/>
<text x="878.5" y="756" font-size="6.5" font-weight="bold" font-style="italic" fill="#1e3f8c" textLength="13" lengthAdjust="spacingAndGlyphs">VISA</text>
<rect x="903" y="746" width="23.8" height="16.4" rx="1.5" fill="url(#cg)"/>
<circle cx="911.3" cy="753.8" r="5.6" fill="#e42a2a"/>
<circle cx="919" cy="753.8" r="5.6" fill="#f5a623" opacity="0.9"/>
<rect x="933" y="746" width="24" height="16.4" rx="1.5" fill="url(#cg)"/>
<text x="934.5" y="751.8" font-size="4" font-weight="bold" fill="#222" textLength="21" lengthAdjust="spacingAndGlyphs">DISCOVER</text>
<path d="M942 762 L957 755 L957 762 Z" fill="#e8772e"/>
<rect x="964" y="746" width="24" height="16.4" rx="1.5" fill="#fbefd5"/>
<text x="966.5" y="755.8" font-size="6" font-weight="bold" font-style="italic" fill="#2a5aa8" textLength="19" lengthAdjust="spacingAndGlyphs">PayPal</text>
</svg>
<div style="position:absolute;left:1025px;top:0;width:1px;height:814px;background:#000"></div>
</body></html>
